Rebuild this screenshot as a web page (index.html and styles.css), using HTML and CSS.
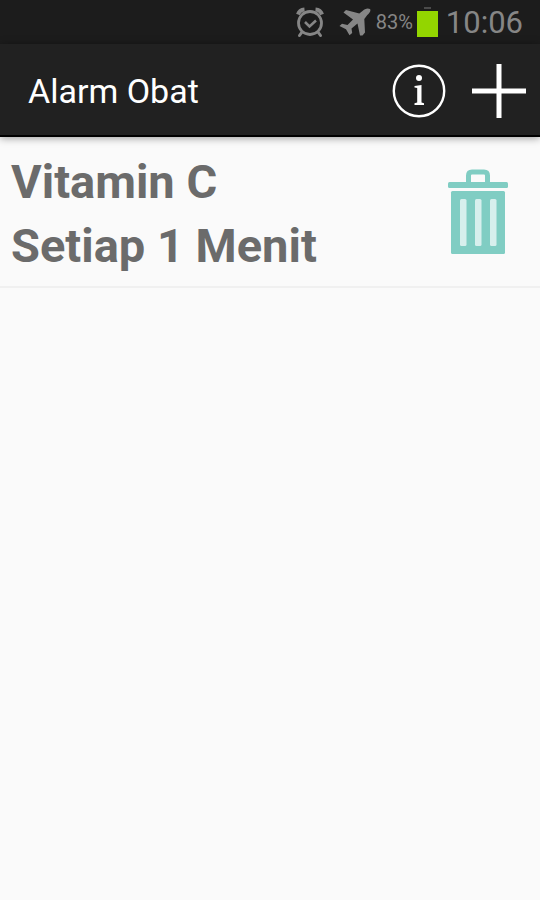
FILE: index.html
```html
<!DOCTYPE html>
<html lang="id">
<head>
    <meta charset="UTF-8">
    <meta name="viewport" content="width=device-width, initial-scale=1.0">
    <title>Alarm Obat</title>
    <link rel="stylesheet" href="styles.css">
</head>
<body>
    <!-- Status bar -->
    <div class="status-bar">
        <svg class="icon-alarm" width="30" height="32" viewBox="0 0 30 32" fill="none" stroke="#868686">
            <circle cx="15" cy="17" r="11.5" stroke-width="2.8"/>
            <path d="M10 16l4.5 4.5 6.5-6" stroke-width="2.5"/>
            <path d="M3 8.500C4 5.500 6 3.800 9.500 3.500M27 8.500C26 5.500 24 3.800 20.500 3.500" stroke-width="4"/>
            <path d="M7 26l-2.500 3.500M23 26l2.500 3.500" stroke-width="3" stroke-linecap="round"/>
        </svg>
        <svg class="icon-plane" width="32" height="28" viewBox="0 0 32 28" fill="#868686">
            <path d="M31 1c-2.500-1.500-5.500 0-7.500 2l-3.200 2.500L7 2 4.500 4.500 14 11.500 8.500 17 3 15.800.5 18l6.500 3.300 3.500 6 2.700-2.300-.7-4.500 6-5 2.500 12h2.500l2.500-3-.7-13.500 3-4c2-2 4-4.500 2.700-6z"/>
        </svg>
        <span class="percent">83%</span>
        <svg class="icon-battery" width="21" height="30" viewBox="0 0 21 30">
            <path d="M7 0h7v2H7z" fill="#4a4a4a"/>
            <path d="M0 4h21v26H0z" fill="#93d500"/>
        </svg>
        <span class="clock">10:06</span>
    </div>

    <!-- App bar -->
    <header class="app-bar">
        <h1>Alarm Obat</h1>
        <button class="icon-btn" type="button" aria-label="Info">
            <svg width="54" height="54" viewBox="0 0 54 54">
                <circle cx="27" cy="27" r="25.2" fill="none" stroke="#fff" stroke-width="2.4"/>
                <circle cx="27" cy="14" r="3" fill="#fff"/>
                <path d="M22.500 22l7-1v17.500l2.500.8V41h-9.500v-1.700l2.700-.8V24l-2.700-.6z" fill="#fff"/>
            </svg>
        </button>
        <button class="icon-btn" type="button" aria-label="Tambah">
            <svg width="54" height="54" viewBox="0 0 54 54" fill="none" stroke="#fff" stroke-width="5">
                <path d="M27 0v54M0 27h54"/>
            </svg>
        </button>
    </header>

    <!-- Alarm list -->
    <ul class="alarm-list">
        <li class="alarm">
            <div class="alarm-text">
                <p>Vitamin C</p>
                <p>Setiap 1 Menit</p>
            </div>
            <button class="icon-btn" type="button" aria-label="Hapus">
                <svg width="60" height="86" viewBox="0 0 60 86" fill="#80cdc3">
                    <path d="M20.500 14V6.500q0-3.500 3.500-3.500h12q3.500 0 3.500 3.500v7.500" fill="none" stroke="#80cdc3" stroke-width="5"/>
                    <rect x="0" y="13" width="60" height="6" rx="1.5"/>
                    <rect x="3" y="22" width="54" height="63" rx="1.5"/>
                    <g fill="#d7efed">
                        <rect x="12" y="30" width="6.5" height="47" rx="1.5"/>
                        <rect x="27" y="30" width="6.5" height="47" rx="1.5"/>
                        <rect x="42" y="30" width="6.5" height="47" rx="1.5"/>
                    </g>
                </svg>
            </button>
        </li>
    </ul>
</body>
</html>
```

FILE: styles.css
```css
* {
    box-sizing: border-box;
}
body {
    margin: 0;
    min-height: 100vh;
    background: #fafafa;
    font-family: Roboto, "Liberation Sans", sans-serif;
}
svg {
    display: block;
}
.status-bar {
    display: flex;
    align-items: center;
    justify-content: flex-end;
    height: 44px;
    padding-right: 17px;
    background: #1c1c1c;
    color: #868686;
}
.icon-plane {
    margin: 0 5px 0 14px;
}
.percent {
    font-size: 20px;
}
.icon-battery {
    margin: 0 8px 0 4px;
}
.clock {
    font-size: 31px;
}
.app-bar {
    display: flex;
    align-items: center;
    gap: 26px;
    height: 93px;
    padding: 2px 14px 0 28px;
    background: #212121;
    border-bottom: 2px solid #000;
    box-shadow: 0 1px 8px rgba(0, 0, 0, 0.4);
}
.app-bar h1 {
    flex: 1;
    margin: 0;
    color: #fff;
    font-size: 34px;
    font-weight: 400;
}
.icon-btn {
    padding: 0;
    border: none;
    background: none;
    cursor: pointer;
}
.alarm-list {
    margin: 0;
    padding: 0;
    list-style: none;
}
.alarm {
    display: flex;
    align-items: center;
    justify-content: space-between;
    padding: 0 32px 0 11px;
    border-bottom: 2px solid #f0f0f0;
}
.alarm-text {
    padding: 13px 0 8px;
}
.alarm-text p {
    margin: 0;
    color: #6b6b6b;
    font-size: 47px;
    font-weight: 700;
    line-height: 64px;
}
```
